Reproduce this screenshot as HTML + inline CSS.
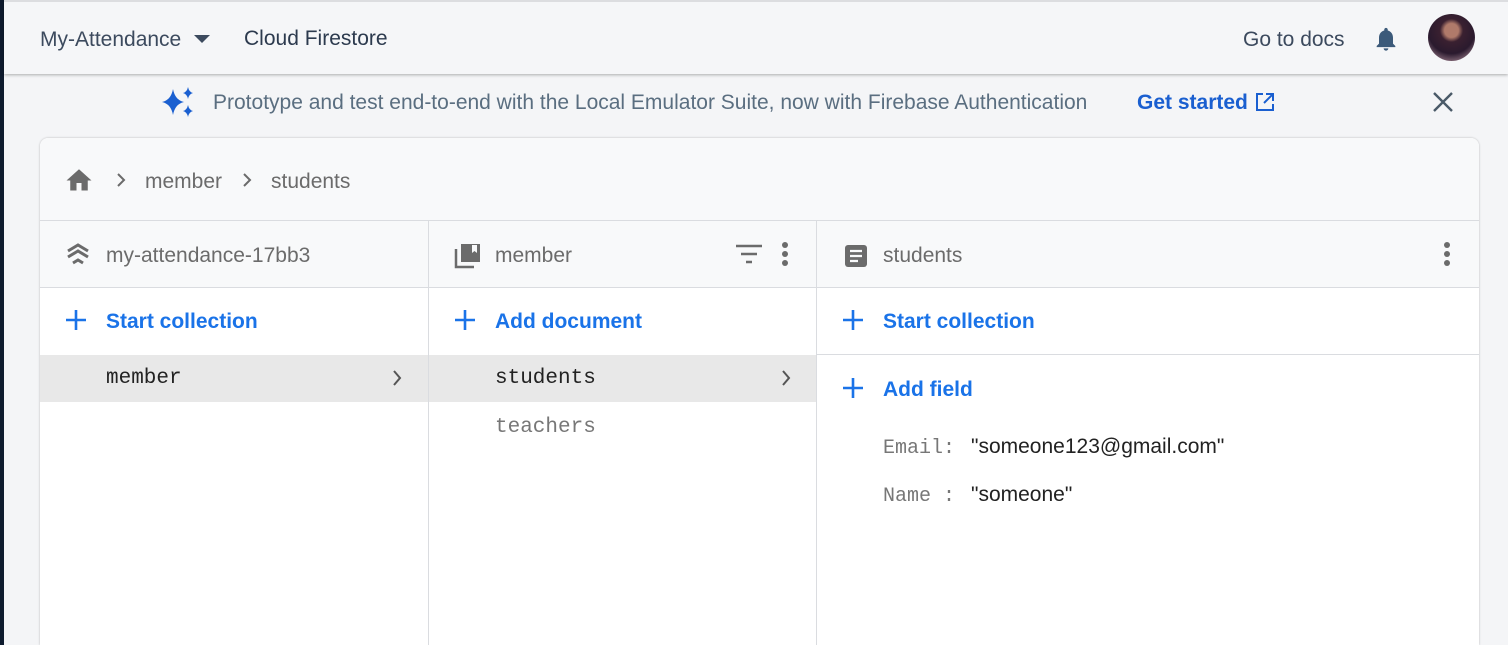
<!DOCTYPE html>
<html><head><meta charset="utf-8"><style>
*{box-sizing:border-box;margin:0;padding:0}
html,body{width:1508px;height:645px;overflow:hidden}
body{background:#f4f5f7;font-family:"Liberation Sans",Arial,sans-serif;position:relative}
.abs{position:absolute}
.strip{left:0;top:0;width:4px;height:645px;background:#0e1b2e}
.top{left:4px;top:0;right:0;height:74px;background:#f5f6f8;border-top:2px solid #dcdde0;box-shadow:0 1px 3px rgba(0,0,0,.3)}
.t{font-size:21px;color:#3c4a5e;white-space:nowrap}
.card{left:40px;top:138px;width:1439px;height:507px;background:#fff;border-radius:8px 8px 0 0;box-shadow:0 0 2px rgba(0,0,0,.25);overflow:hidden}
.bc{left:0;top:0;width:100%;height:83px;background:#f8f9fa;border-bottom:1px solid #dadce0}
.gray{color:#6b6b6b;font-size:21px}
.col{top:83px;height:430px;border-right:1px solid #dadce0}
.ch{left:0;top:0;width:100%;height:67px;background:#f8f9fa;border-bottom:1px solid #dadce0}
.blue{color:#1a73e8;font-size:21px;font-weight:bold}
.mono{font-family:"Liberation Mono",monospace;font-size:21px}
</style></head><body>
<div class="abs strip"></div>
<div class="abs top"></div>
<div class="abs t" style="left:40px;top:28px">My-Attendance</div>
<svg class="abs" style="left:193px;top:34px" width="18" height="10"><path d="M1 1h16l-8 8z" fill="#3c4a5e"/></svg>
<div class="abs t" style="left:244px;top:27px;color:#2c3a4e">Cloud Firestore</div>
<div class="abs t" style="left:1243px;top:28px">Go to docs</div>
<svg class="abs" style="left:1372px;top:23px" width="28" height="32" viewBox="0 0 24 24"><path d="M12 22c1.1 0 2-.9 2-2h-4c0 1.1.9 2 2 2zm6-6v-5c0-3.1-1.6-5.6-4.5-6.3V4c0-.8-.7-1.5-1.5-1.5s-1.5.7-1.5 1.5v.7C7.6 5.4 6 7.9 6 11v5l-2 2v1h16v-1l-2-2z" fill="#3c5a7a"/></svg>
<div class="abs" style="left:1428px;top:14px;width:47px;height:47px;border-radius:50%;background:radial-gradient(circle at 50% 35%,#b07a6a 0 18%,#3a2030 30%,#2a1a2e 60%,#c9a4b0 100%)"></div>
<svg class="abs" style="left:160px;top:85px" width="36" height="34" viewBox="0 0 36 34"><path d="M13 4 Q15 15 24 17 Q15 19 13 30 Q11 19 2 17 Q11 15 13 4z" fill="#1a5fd0"/><path d="M28 2 Q29 7 33 8 Q29 9 28 14 Q27 9 23 8 Q27 7 28 2z" fill="#1a5fd0"/><path d="M28 20 Q29 25 33 26 Q29 27 28 32 Q27 27 23 26 Q27 25 28 20z" fill="#1a5fd0"/></svg>
<div class="abs t" style="left:213px;top:91px;color:#5a6e80">Prototype and test end-to-end with the Local Emulator Suite, now with Firebase Authentication</div>
<div class="abs" style="left:1137px;top:91px;font-size:21px;font-weight:bold;color:#1a5fd0">Get started</div>
<svg class="abs" style="left:1255px;top:92px" width="20" height="20" viewBox="0 0 20 20"><path d="M8 2H2v16h16v-6M11 2h7v7M18 2l-9 9" fill="none" stroke="#1a5fd0" stroke-width="2"/></svg>
<svg class="abs" style="left:1432px;top:91px" width="22" height="22"><path d="M2 2l18 18M20 2L2 20" stroke="#4a5a68" stroke-width="2.4"/></svg>
<div class="abs card">
 <div class="abs bc">
  <svg class="abs" style="left:24px;top:27px" width="30" height="26" viewBox="0 0 24 20"><path d="M10 20v-6h4v6h5v-8h3L12 3 2 12h3v8z" fill="#6b6b6b"/></svg>
  <svg class="abs" style="left:76px;top:34px" width="10" height="16"><path d="M2 2l6 6-6 6" fill="none" stroke="#6b6b6b" stroke-width="2"/></svg>
  <div class="abs gray" style="left:105px;top:32px">member</div>
  <svg class="abs" style="left:202px;top:34px" width="10" height="16"><path d="M2 2l6 6-6 6" fill="none" stroke="#6b6b6b" stroke-width="2"/></svg>
  <div class="abs gray" style="left:231px;top:32px">students</div>
 </div>
 <div class="abs col" style="left:0;width:389px">
  <div class="abs ch">
   <svg class="abs" style="left:25px;top:21px" width="26" height="26" viewBox="0 0 26 26"><path d="M3 9l10-6 10 6M3 15l10-6 10 6M8 21l5-3 5 3" fill="none" stroke="#6b6b6b" stroke-width="3"/></svg>
   <div class="abs gray" style="left:66px;top:23px">my-attendance-17bb3</div>
  </div>
  <svg class="abs" style="left:25px;top:88px" width="22" height="22"><path d="M11 1v20M1 11h20" stroke="#1a73e8" stroke-width="2.6"/></svg>
  <div class="abs blue" style="left:66px;top:89px">Start collection</div>
  <div class="abs" style="left:0;top:134px;width:100%;height:47px;background:#e8e8e8"></div>
  <div class="abs mono" style="left:66px;top:146px;color:#222">member</div>
  <svg class="abs" style="left:352px;top:148px" width="10" height="18"><path d="M2 2l6 7-6 7" fill="none" stroke="#555" stroke-width="2"/></svg>
 </div>
 <div class="abs col" style="left:389px;width:388px">
  <div class="abs ch">
   <svg class="abs" style="left:25px;top:22px" width="27" height="26" viewBox="0 0 27 26"><path d="M2 6v18h18" fill="none" stroke="#6b6b6b" stroke-width="2.5"/><rect x="7" y="1" width="19" height="18" fill="#6b6b6b"/><path d="M18 2v8l2.5-2 2.5 2V2z" fill="#f8f9fa"/></svg>
   <div class="abs gray" style="left:66px;top:23px">member</div>
   <svg class="abs" style="left:306px;top:23px" width="28" height="20"><path d="M1 2h26M6 10h16M11 18h6" stroke="#6b6b6b" stroke-width="2.5"/></svg>
   <svg class="abs" style="left:352px;top:20px" width="8" height="26"><circle cx="4" cy="4" r="3" fill="#6b6b6b"/><circle cx="4" cy="13" r="3" fill="#6b6b6b"/><circle cx="4" cy="22" r="3" fill="#6b6b6b"/></svg>
  </div>
  <svg class="abs" style="left:25px;top:88px" width="22" height="22"><path d="M11 1v20M1 11h20" stroke="#1a73e8" stroke-width="2.6"/></svg>
  <div class="abs blue" style="left:66px;top:89px">Add document</div>
  <div class="abs" style="left:0;top:134px;width:100%;height:47px;background:#e8e8e8"></div>
  <div class="abs mono" style="left:66px;top:146px;color:#222">students</div>
  <svg class="abs" style="left:352px;top:148px" width="10" height="18"><path d="M2 2l6 7-6 7" fill="none" stroke="#555" stroke-width="2"/></svg>
  <div class="abs mono" style="left:66px;top:195px;color:#777">teachers</div>
 </div>
 <div class="abs col" style="left:777px;width:662px;border-right:none">
  <div class="abs ch">
   <svg class="abs" style="left:28px;top:24px" width="22" height="22" viewBox="0 0 22 22"><rect x="0" y="0" width="22" height="22" rx="3" fill="#6b6b6b"/><path d="M5 6h12M5 11h12M5 16h8" stroke="#f8f9fa" stroke-width="2.2"/></svg>
   <div class="abs gray" style="left:66px;top:23px">students</div>
   <svg class="abs" style="left:626px;top:20px" width="8" height="26"><circle cx="4" cy="4" r="3" fill="#6b6b6b"/><circle cx="4" cy="13" r="3" fill="#6b6b6b"/><circle cx="4" cy="22" r="3" fill="#6b6b6b"/></svg>
  </div>
  <svg class="abs" style="left:25px;top:88px" width="22" height="22"><path d="M11 1v20M1 11h20" stroke="#1a73e8" stroke-width="2.6"/></svg>
  <div class="abs blue" style="left:66px;top:89px">Start collection</div>
  <div class="abs" style="left:0;top:133px;width:100%;height:1px;background:#dadce0"></div>
  <svg class="abs" style="left:25px;top:156px" width="22" height="22"><path d="M11 1v20M1 11h20" stroke="#1a73e8" stroke-width="2.6"/></svg>
  <div class="abs blue" style="left:66px;top:157px">Add field</div>
  <div class="abs mono" style="left:66px;top:216px;color:#777;font-size:20px">Email:</div>
  <div class="abs" style="left:154px;top:214px;font-size:21px;color:#222">"someone123@gmail.com"</div>
  <div class="abs mono" style="left:66px;top:264px;color:#777;font-size:20px">Name :</div>
  <div class="abs" style="left:154px;top:262px;font-size:21px;color:#222">"someone"</div>
 </div>
</div>
</body></html>
